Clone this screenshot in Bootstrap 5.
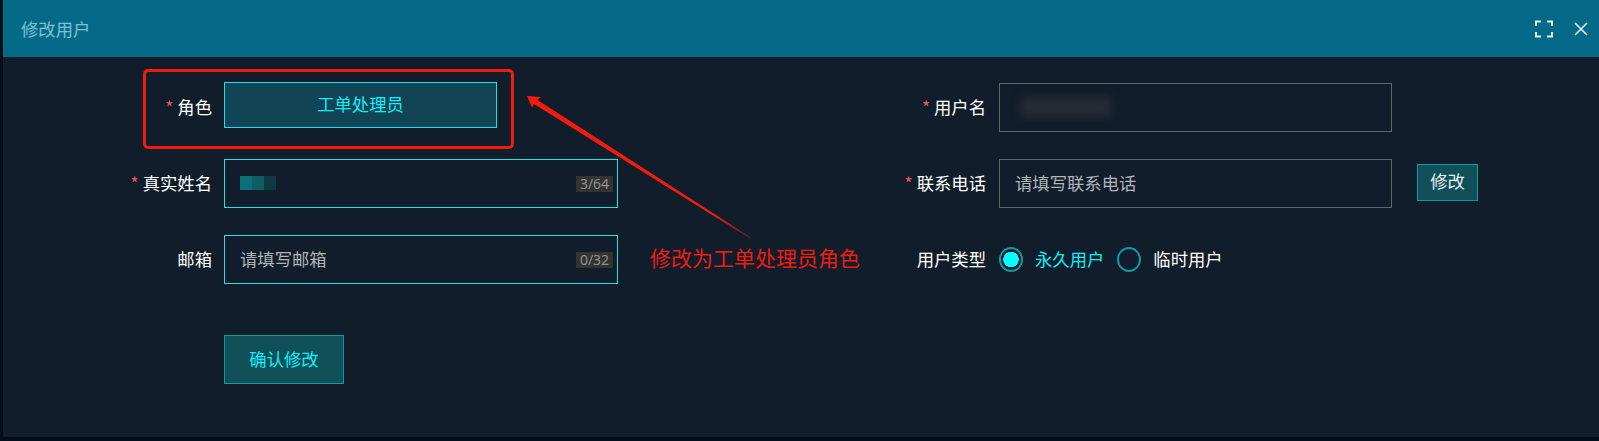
<!DOCTYPE html>
<html lang="zh-CN">
<head>
<meta charset="utf-8">
<title>修改用户</title>
<link href="https://cdn.jsdelivr.net/npm/bootstrap@5.3.0/dist/css/bootstrap.min.css" rel="stylesheet">
<style>
html,body{height:441px;overflow:hidden}
body{background:#040d1c;font-family:"Noto Sans CJK SC","Liberation Sans",sans-serif;font-size:17.33px;color:#fff;position:relative}
.dlg{margin-left:3px;height:437px;background:#111d2a}
.dlg-head{height:57px;background:#056a88;padding:0 11px 0 18px;color:#7cc0d8}
.dlg-title{font-size:17.33px;line-height:1}
.form-area{padding-top:26px}
.fld{height:49px;margin-bottom:27px}
.lbl-l{width:209px;margin-right:12px}
.lbl-r{width:185px;margin-right:12px}
.lbl-l,.lbl-r{text-align:right;line-height:1;color:#fff;flex:none;padding-bottom:2px}
.req{color:#ef5a5a;margin-right:4px}
.ctl{width:394px;height:49px;flex:none}
.ctl-off{width:393px;margin-left:1px}
.ctl .form-control{height:100%;background:transparent;border-radius:0;font-size:17.33px;color:#fff;padding:0 15px 3px;box-shadow:none}
.ctl .form-control::placeholder{color:#b0b4b8;opacity:1}
.ctl-on .form-control{border:1px solid #22e0ea}
.ctl-off .form-control{border:1px solid #5f6469}
.role-box{width:273px;height:46px;margin-top:-1px;background:#114455;border:1px solid #16dff0;color:#14eef8;font-size:17.33px;border-radius:0;padding:0 0 2px}
.cnt{position:absolute;right:5px;top:17px;width:37px;height:16px;background:#333;color:#919191;font:14px/16px "Noto Sans","Liberation Sans",sans-serif;text-align:center}
.smudge-a{position:absolute;left:16px;top:17px;display:flex}
.smudge-a i{display:block;width:12px;height:14px}
.smudge-b{position:absolute;left:22px;top:14px;width:90px;height:20px;background:#262c35;filter:blur(5px)}
.btn-teal{background:#115059;border:1px solid #0a9ba5;border-radius:0;color:#10eef6;font-size:17.33px;padding:0 0 2px}
.btn-teal:hover{background:#115059;color:#10eef6;border-color:#0a9ba5}
.btn-save{width:120px;height:49px;margin-left:221px;margin-top:24px}
.btn-edit{width:61px;height:37px;margin-left:25px;margin-bottom:3px;color:#e6eef0}
.btn-edit:hover{color:#e6eef0}
.rd{width:24px;height:25px;margin:0 0 0 1px;flex:none;background:#111d2a;border:2px solid #0a9ba5;border-radius:50%}
.form-check-input.rd:checked{background:radial-gradient(circle,#0ff 0 7.5px,transparent 8px);border-color:#0a9ba5}
.form-check-input.rd:focus{box-shadow:none}
.rd-on{color:#12eef6;margin:0 12px 0 12px;padding-bottom:2px}
.rd-off{color:#fff;margin-left:12px;padding-bottom:2px}
.mark-box{position:absolute;left:143px;top:69px;width:371px;height:80px;border:3px solid #f21b0e;border-radius:5px;pointer-events:none}
.mark-arrow{position:absolute;left:0;top:0;pointer-events:none}
.mark-text{position:absolute;left:650px;top:242px;font-size:21px;line-height:30px;color:#ee1c10;white-space:nowrap}
.gap-ic{gap:21px}
</style>
</head>
<body>
<div class="dlg">
  <div class="dlg-head d-flex align-items-center justify-content-between">
    <span class="dlg-title">修改用户</span>
    <div class="d-flex align-items-center gap-ic">
      <svg width="18" height="18" viewBox="0 0 18 18" fill="none" stroke="#d8f2f8" stroke-width="2"><path d="M1 6V1.500H6M12 1.500H17V6M17 12V16.500H12M6 16.500H1V12"/></svg>
      <svg width="14" height="14" viewBox="0 0 14 14" fill="none" stroke="#e8f6fa" stroke-width="1.600"><path d="M1 1L13 13M13 1L1 13"/></svg>
    </div>
  </div>
  <form class="form-area row g-0">
    <div class="col-6">
      <div class="fld d-flex align-items-center">
        <label class="lbl-l"><span class="req">*</span>角色</label>
        <button type="button" class="btn role-box align-self-start">工单处理员</button>
      </div>
      <div class="fld d-flex align-items-center">
        <label class="lbl-l"><span class="req">*</span>真实姓名</label>
        <div class="ctl ctl-on position-relative">
          <input class="form-control" type="text" aria-label="真实姓名">
          <div class="smudge-a"><i style="background:#0c7079"></i><i style="background:#0d5f62"></i><i style="background:#0f3a44"></i></div>
          <span class="cnt">3/64</span>
        </div>
      </div>
      <div class="fld d-flex align-items-center">
        <label class="lbl-l">邮箱</label>
        <div class="ctl ctl-on position-relative">
          <input class="form-control" type="text" placeholder="请填写邮箱">
          <span class="cnt">0/32</span>
        </div>
      </div>
      <button type="button" class="btn btn-teal btn-save">确认修改</button>
    </div>
    <div class="col-6">
      <div class="fld d-flex align-items-center">
        <label class="lbl-r"><span class="req">*</span>用户名</label>
        <div class="ctl ctl-off position-relative">
          <input class="form-control" type="text" aria-label="用户名">
          <div class="smudge-b"></div>
        </div>
      </div>
      <div class="fld d-flex align-items-center">
        <label class="lbl-r"><span class="req">*</span>联系电话</label>
        <div class="ctl ctl-off">
          <input class="form-control" type="text" placeholder="请填写联系电话">
        </div>
        <button type="button" class="btn btn-teal btn-edit">修改</button>
      </div>
      <div class="fld d-flex align-items-center">
        <label class="lbl-r">用户类型</label>
        <input class="form-check-input rd" type="radio" name="utype" checked aria-label="永久用户">
        <span class="rd-on">永久用户</span>
        <input class="form-check-input rd" type="radio" name="utype" aria-label="临时用户">
        <span class="rd-off">临时用户</span>
      </div>
    </div>
  </form>
</div>
<div class="mark-box"></div>
<svg class="mark-arrow" width="1599" height="441" viewBox="0 0 1599 441">
  <defs><linearGradient id="fade" gradientUnits="userSpaceOnUse" x1="527" y1="96" x2="750" y2="238"><stop offset="0.85" stop-color="#f21b0e"/><stop offset="1" stop-color="#f21b0e" stop-opacity="0.3"/></linearGradient></defs>
  <polygon fill="url(#fade)" points="527,96 541,97 537.500,100 751,237.500 750,238.500 534,104 532,107.500"/>
</svg>
<div class="mark-text">修改为工单处理员角色</div>
<script src="https://cdn.jsdelivr.net/npm/bootstrap@5.3.0/dist/js/bootstrap.bundle.min.js"></script>
</body>
</html>
